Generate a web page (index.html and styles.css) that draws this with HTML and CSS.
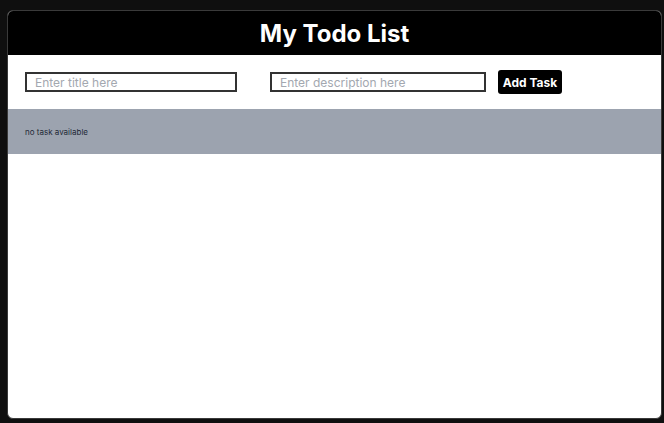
FILE: index.html
```html
<!DOCTYPE html>
<html lang="en">
<head>
<meta charset="utf-8">
<title>My Todo List</title>
<link rel="stylesheet" href="styles.css">
</head>
<body>
<div class="card">
  <header class="header"><h1 class="title">My Todo List</h1></header>
  <form class="form">
    <input class="field field-title" type="text" placeholder="Enter title here">
    <input class="field field-desc" type="text" placeholder="Enter description here">
    <button class="btn" type="button">Add Task</button>
  </form>
  <div class="tasks"><p class="empty">no task available</p></div>
</div>
</body>
</html>
```
FILE: styles.css
```css
html, body {
  margin: 0;
  padding: 0;
  background: #0f0f0f;
  font-family: Inter, "Noto Sans", sans-serif;
}
body {
  padding: 10px 2px 4px 7px;
  height: 423px;
  box-sizing: border-box;
}
.card {
  height: 100%;
  background: #fff;
  border: 1px solid #3a3a3a;
  border-radius: 6px;
  overflow: hidden;
  box-sizing: border-box;
}
.header {
  background: #000;
  height: 44px;
  display: flex;
  align-items: center;
  justify-content: center;
}
.title {
  margin: 0;
  color: #fff;
  font-size: 24px;
  font-weight: 700;
  letter-spacing: 0;
}
.form {
  display: flex;
  align-items: center;
  padding: 0 0 0 17px;
  height: 54px;
  margin: 0;
}
.field {
  height: 20px;
  box-sizing: border-box;
  border: 2px solid #333;
  padding: 0 8px;
  font-family: Inter, sans-serif;
  font-size: 12px;
  color: #111;
  outline: none;
  border-radius: 0;
  background: #fff;
}
.field::placeholder { color: #a3a8b0; }
.field-title { width: 212px; margin-right: 33px; }
.field-desc { width: 216px; margin-right: 12px; }
.btn {
  height: 24px;
  width: 64px;
  background: #000;
  color: #fff;
  border: none;
  border-radius: 3px;
  font-family: Inter, sans-serif;
  font-weight: 700;
  font-size: 12px;
  padding: 0;
}
.tasks {
  background: #9ca3af;
  height: 45px;
  display: flex;
  align-items: center;
  padding-left: 17px;
}
.empty {
  margin: 0;
  font-size: 8px;
  color: #1f2937;
}
```
